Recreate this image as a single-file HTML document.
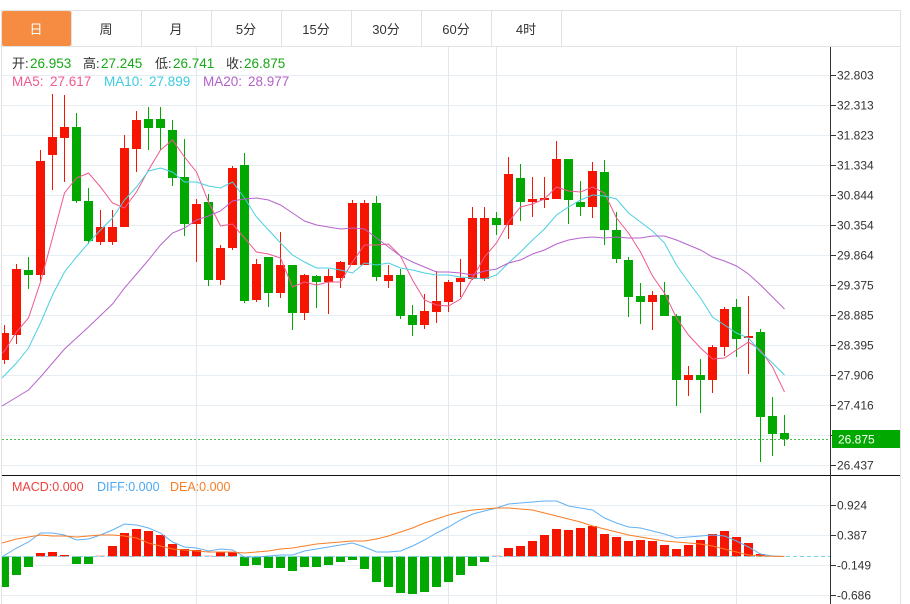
<!DOCTYPE html>
<html><head><meta charset="utf-8"><style>
html,body{margin:0;padding:0;background:#fff;width:910px;height:604px;overflow:hidden}
svg{display:block}
text{font-family:"Liberation Sans","Noto Sans CJK SC",sans-serif}
</style></head><body>
<svg width="910" height="604" viewBox="0 0 910 604" xmlns="http://www.w3.org/2000/svg">
<defs><clipPath id="c"><rect x="2" y="47" width="828" height="557"/></clipPath></defs>
<!-- frame -->
<path d="M1.5 604V10.5H900.5V604" fill="none" stroke="#e2e2e2"/>
<path d="M2 46.5H900M71.5 11V46M141.5 11V46M211.5 11V46M281.5 11V46M351.5 11V46M421.5 11V46M491.5 11V46M561.5 11V46" stroke="#e2e2e2" fill="none"/>
<rect x="2" y="11" width="69" height="35" rx="2" fill="#f58c42"/>
<g font-size="13" text-anchor="middle" fill="#333">
<text x="36" y="34" fill="#fff">日</text><text x="106" y="34">周</text><text x="176" y="34">月</text><text x="246" y="34">5分</text><text x="316" y="34">15分</text><text x="386" y="34">30分</text><text x="456" y="34">60分</text><text x="526" y="34">4时</text>
</g>
<!-- grid -->
<path d="M2 75.5H830M2 105.5H830M2 135.5H830M2 165.5H830M2 195.5H830M2 225.5H830M2 255.5H830M2 285.5H830M2 315.5H830M2 345.5H830M2 375.5H830M2 405.5H830M2 435.5H830M2 465.5H830M2 505.5H830M2 535.5H830M2 565.5H830M2 595.5H830" stroke="#e6edf3" fill="none"/>
<path d="M196.5 47V604M448.5 47V604M496.5 47V604M736.5 47V604" stroke="#dfe9f1" fill="none"/>
<g clip-path="url(#c)">
<!-- red wicks & bodies -->
<path fill="none" stroke="#f51500" d="M4.5 325V364M16.5 264V344M40.5 150V281M52.5 94V190M64.5 95V182M100.5 210V245M112.5 210V245M124.5 135V227M136.5 111V172M196.5 199V262M220.5 245V285M232.5 166V250M256.5 259V302M280.5 232V298M304.5 274V320M328.5 269V314M340.5 261V288M352.5 200V265M364.5 200V265M388.5 265V288M424.5 294V329M436.5 271V323M448.5 280V312M460.5 259V297M472.5 207V280M484.5 207V281M508.5 157V239M532.5 177V217M544.5 177V208M556.5 141V199M592.5 162V218M652.5 291V330M688.5 366V396M712.5 345V393M724.5 307V356M748.5 296V374"/>
<path fill="#f51500" d="M0 333h9V360H0zM12 269h9V335H12zM36 161h9V275H36zM48 137h9V155H48zM60 127h9V138H60zM96 227h9V242H96zM108 227h9V242H108zM120 148h9V227H120zM132 120h9V149H132zM192 204h9V224H192zM216 248h9V280H216zM228 168h9V248H228zM252 264h9V300H252zM276 265h9V293H276zM300 275h9V313H300zM324 276h9V282H324zM336 262h9V278H336zM348 203h9V265H348zM360 203h9V265H360zM384 275h9V281H384zM420 311h9V325H420zM432 301h9V312H432zM444 282h9V302H444zM456 278h9V282H456zM468 218h9V279H468zM480 218h9V279H480zM504 174h9V225H504zM528 199h9V202H528zM540 198h9V200H540zM552 159h9V199H552zM588 171h9V207H588zM648 295h9V302H648zM684 375h9V380H684zM708 347h9V380H708zM720 309h9V347H720zM744 336h9V338H744z"/>
<!-- green wicks & bodies -->
<path fill="none" stroke="#00a800" d="M28.5 257V289M76.5 113V203M88.5 188V244M148.5 107V150M160.5 107V150M172.5 120V186M184.5 139V236M208.5 194V286M244.5 153V303M268.5 257V307M292.5 265V330M316.5 275V308M376.5 196V281M400.5 269V319M412.5 305V336M496.5 212V235M520.5 164V221M568.5 159V224M580.5 181V216M604.5 160V245M616.5 212V263M628.5 257V317M640.5 283V324M664.5 282V316M676.5 314V406M700.5 359V413M736.5 299V357M760.5 329V462M772.5 397V456M784.5 415V446"/>
<path fill="#00a800" d="M24 270h9V275H24zM72 127h9V201H72zM84 201h9V241H84zM144 119h9V128H144zM156 119h9V128H156zM168 130h9V178H168zM180 177h9V224H180zM204 202h9V280H204zM240 165h9V301H240zM264 257h9V293H264zM288 265h9V313H288zM312 276h9V282H312zM372 203h9V277H372zM396 275h9V316H396zM408 315h9V325H408zM492 218h9V225H492zM516 178h9V202H516zM564 159h9V200H564zM576 202h9V207H576zM600 172h9V230H600zM612 230h9V259H612zM624 260h9V297H624zM636 296h9V302H636zM660 295h9V316H660zM672 316h9V380H672zM696 375h9V380H696zM732 307h9V339H732zM756 332h9V417H756zM768 416h9V434H768zM780 433h9V439H780z"/>
<!-- MA lines -->
<path fill="none" stroke="#f0588f" d="M2 353L4.500 351L16.500 332L28.500 318L40.500 282L52.500 238L64.500 193L76.500 178L88.500 173L100.500 187L112.500 203L124.500 208L136.500 192L148.500 170L160.500 150L172.500 140L184.500 157L196.500 172L208.500 202L220.500 226L232.500 224L244.500 238L256.500 252L268.500 254L280.500 258L292.500 287L304.500 282L316.500 285L328.500 282L340.500 282L352.500 262L364.500 245L376.500 245L388.500 244L400.500 256L412.500 280L424.500 300L436.500 305L448.500 306L460.500 299L472.500 278L484.500 257L496.500 243L508.500 222L520.500 207L532.500 204L544.500 199L556.500 187L568.500 191L580.500 192L592.500 187L604.500 193L616.500 218L628.500 233L640.500 252L652.500 276L664.500 293L676.500 318L688.500 335L700.500 348L712.500 359L724.500 358L736.500 350L748.500 342L760.500 350L772.500 367L784.500 392"/>
<path fill="none" stroke="#4bd0e2" d="M2 378L16.500 363L28.500 348L40.500 323L52.500 295L64.500 272L76.500 257L88.500 243L100.500 230L112.500 218L124.500 200L136.500 187L148.500 171L160.500 168L172.500 172L184.500 182L196.500 182L208.500 186L220.500 188L232.500 182L244.500 198L256.500 217L268.500 230L280.500 243L292.500 255L304.500 262L316.500 268L328.500 268L340.500 270L352.500 273L364.500 263L376.500 265L388.500 263L400.500 268L412.500 270L424.500 273L436.500 275L448.500 275L460.500 277L472.500 278L484.500 279L496.500 275L508.500 263L520.500 252L532.500 240L544.500 229L556.500 215L568.500 207L580.500 200L592.500 195L604.500 196L616.500 199L628.500 213L640.500 222L652.500 231L664.500 243L676.500 265L688.500 282L700.500 298L712.500 317L724.500 325L736.500 333L748.500 338L760.500 352L772.500 363L784.500 375"/>
<path fill="none" stroke="#b764cc" d="M2 406L12 400L28.500 390L40.500 377L52.500 363L64.500 349L88.500 327L112.500 304L124.500 288L136.500 274L148.500 260L160.500 245L172.500 233L184.500 228L196.500 220L208.500 216L220.500 211L232.500 201L244.500 199L256.500 198L268.500 200L280.500 205L292.500 213L304.500 221L316.500 225L328.500 227L340.500 229L352.500 228L364.500 229L376.500 238L388.500 247L400.500 256L412.500 262L424.500 267L436.500 272L448.500 272L460.500 273L472.500 275L484.500 271L496.500 269L508.500 263L520.500 260L532.500 254L544.500 250L556.500 244L568.500 240L580.500 238L592.500 237L604.500 238L616.500 237L628.500 238L640.500 238L652.500 236L664.500 236L676.500 240L688.500 245L700.500 250L712.500 257L724.500 261L736.500 266L748.500 274L760.500 285L772.500 297L784.500 309"/>
<!-- last price line -->
<path d="M2 439.500H830" stroke="#4cbc4c" stroke-dasharray="2 2" fill="none"/>
<!-- MACD bars -->
<path fill="#f51500" d="M36 553h9v3.500H36zM48 552h9v4.500H48zM60 555h9v1.500H60zM108 546h9v10.500H108zM120 533h9v23.500H120zM132 529h9v27.500H132zM144 531h9v25.500H144zM156 535h9v21.500H156zM168 544h9v12.500H168zM180 549h9v7.500H180zM192 550h9v6.500H192zM216 552h9v4.500H216zM228 552h9v4.500H228zM504 548h9v8.500H504zM516 546h9v10.500H516zM528 541h9v15.500H528zM540 535h9v21.500H540zM552 529h9v27.500H552zM564 530h9v26.500H564zM576 528h9v28.500H576zM588 526h9v30.500H588zM600 534h9v22.500H600zM612 537h9v19.500H612zM624 541h9v15.500H624zM636 540h9v16.500H636zM648 541h9v15.500H648zM660 545h9v11.500H660zM672 549h9v7.500H672zM684 545h9v11.500H684zM696 540h9v16.500H696zM708 534h9v22.500H708zM720 531h9v25.500H720zM732 537h9v19.500H732zM744 543h9v13.500H744zM756 554h9v2.500H756z"/>
<path fill="#f7a79e" d="M96 555.500h9v1H96zM204 555.500h9v1H204zM492 555.500h9v1H492z"/>
<path fill="#00a800" d="M0 556.500h9V587H0zM12 556.500h9V575H12zM24 556.500h9V567H24zM72 556.500h9V564H72zM84 556.500h9V564H84zM240 556.500h9V566H240zM252 556.500h9V565H252zM264 556.500h9V568H264zM276 556.500h9V568H276zM288 556.500h9V571H288zM300 556.500h9V567H300zM312 556.500h9V567H312zM324 556.500h9V565H324zM336 556.500h9V562H336zM348 556.500h9V560H348zM360 556.500h9V569H360zM372 556.500h9V582H372zM384 556.500h9V587H384zM396 556.500h9V593H396zM408 556.500h9V594H408zM420 556.500h9V592H420zM432 556.500h9V587H432zM444 556.500h9V582H444zM456 556.500h9V575H456zM468 556.500h9V566H468zM480 556.500h9V562H480z"/>
<path d="M2 556.500H830" stroke="#7fd4ee" stroke-dasharray="4 3" fill="none"/>
<!-- DIFF / DEA -->
<path fill="none" stroke="#63b1f4" d="M2 557L16.500 548L28.500 542L40.500 533L52.500 533L64.500 535L76.500 540L88.500 539L100.500 535L112.500 530L124.500 524L136.500 525L148.500 528L160.500 533L172.500 542L184.500 547L196.500 548L208.500 551L220.500 549L232.500 550L244.500 557L256.500 557L268.500 556L280.500 555L292.500 555L304.500 551L316.500 549L328.500 547L340.500 545L352.500 543L364.500 547L376.500 552L388.500 552L400.500 551L412.500 546L424.500 540L436.500 533L448.500 527L460.500 520L472.500 514L484.500 511L496.500 508L508.500 504L520.500 503L532.500 502L544.500 501L556.500 501L568.500 506L580.500 508L592.500 510L604.500 518L616.500 523L628.500 527L640.500 528L652.500 531L664.500 534L676.500 538L688.500 537L700.500 536L712.500 535L724.500 536L736.500 541L748.500 547L760.500 554L772.500 556L784.500 556.500"/>
<path fill="none" stroke="#f87e26" d="M2 543L16.500 539L28.500 537L40.500 535L52.500 536L64.500 536L76.500 537L88.500 536L100.500 535L112.500 535L124.500 536L136.500 538L148.500 543L160.500 546L172.500 549L184.500 550L196.500 551L208.500 552L220.500 552L232.500 552L244.500 553L256.500 552L268.500 551L280.500 549L292.500 548L304.500 546L316.500 544L328.500 543L340.500 542L352.500 541L364.500 541L376.500 539L388.500 536L400.500 532L412.500 528L424.500 523L436.500 519L448.500 515L460.500 512L472.500 510L484.500 509L496.500 508L508.500 508L520.500 509L532.500 510L544.500 513L556.500 516L568.500 519L580.500 522L592.500 526L604.500 529L616.500 532L628.500 535L640.500 537L652.500 539L664.500 541L676.500 542L688.500 543L700.500 544L712.500 546L724.500 549L736.500 552L748.500 555L760.500 556L784.500 556.500"/>
</g>
<!-- axis -->
<path d="M2 475.500H900" stroke="#111" fill="none"/>
<path d="M830.500 47V604" stroke="#333" fill="none"/>
<path d="M831 75.500h5M831 105.500h5M831 135.500h5M831 165.500h5M831 195.500h5M831 225.500h5M831 255.500h5M831 285.500h5M831 315.500h5M831 345.500h5M831 375.500h5M831 405.500h5M831 435.500h5M831 465.500h5M831 505.500h5M831 535.500h5M831 565.500h5M831 595.500h5" stroke="#333" fill="none"/>
<g font-size="12" fill="#333">
<text x="837" y="79.500">32.803</text><text x="837" y="109.500">32.313</text><text x="837" y="139.500">31.823</text><text x="837" y="169.500">31.334</text><text x="837" y="199.500">30.844</text><text x="837" y="229.500">30.354</text><text x="837" y="259.500">29.864</text><text x="837" y="289.500">29.375</text><text x="837" y="319.500">28.885</text><text x="837" y="349.500">28.395</text><text x="837" y="379.500">27.906</text><text x="837" y="409.500">27.416</text><text x="837" y="469.500">26.437</text>
<text x="837" y="509.500">0.924</text><text x="837" y="539.500">0.387</text><text x="837" y="569.500">-0.149</text><text x="837" y="599.500">-0.686</text>
</g>
<rect x="832" y="430" width="68" height="18" fill="#00a800"/>
<text x="838" y="443.500" font-size="12" fill="#fff">26.875</text>
<!-- header -->
<g font-size="13.500">
<g fill="#333"><text x="12" y="68" font-size="13">开:</text><text x="83" y="68" font-size="13">高:</text><text x="155" y="68" font-size="13">低:</text><text x="226" y="68" font-size="13">收:</text></g>
<g fill="#14a814"><text x="30" y="68">26.953</text><text x="101" y="68">27.245</text><text x="173" y="68">26.741</text><text x="244" y="68">26.875</text></g>
<g fill="#f0588f"><text x="12" y="86">MA5:</text><text x="50" y="86">27.617</text></g>
<g fill="#3ccbe0"><text x="104" y="86">MA10:</text><text x="149" y="86">27.899</text></g>
<g fill="#b45fc8"><text x="203" y="86">MA20:</text><text x="248" y="86">28.977</text></g>
</g>
<g font-size="12.500">
<text x="12" y="491" fill="#f04040">MACD:0.000</text>
<text x="97" y="491" fill="#4aa8f5">DIFF:0.000</text>
<text x="170" y="491" fill="#f87e26">DEA:0.000</text>
</g>
</svg>
</body></html>
